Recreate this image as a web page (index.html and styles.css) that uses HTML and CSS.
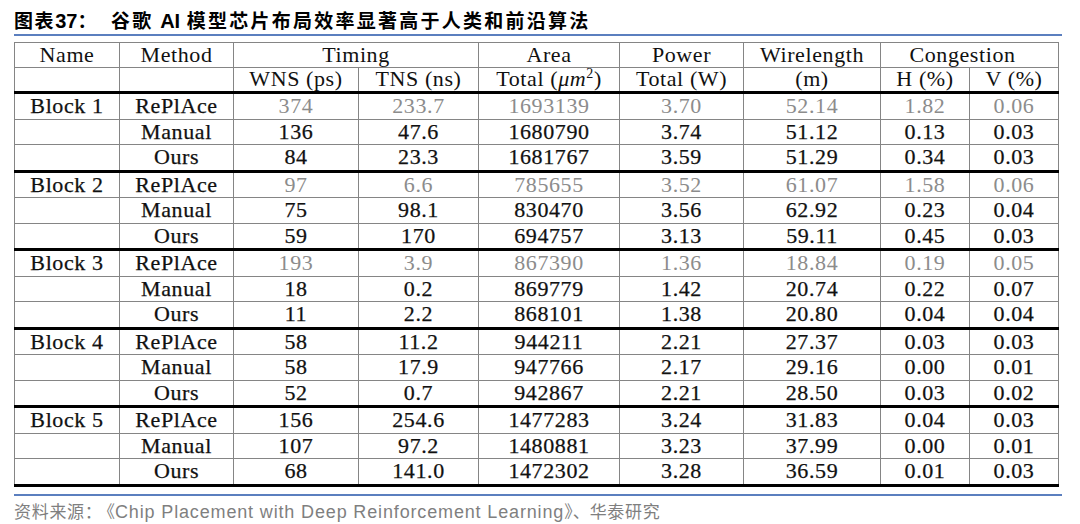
FILE: index.html
```html
<!DOCTYPE html>
<html lang="zh">
<head>
<meta charset="utf-8">
<title>图表37</title>
<link rel="stylesheet" href="styles.css">
</head>
<body>
<div class="page">
  <div class="title"><span class="label">图表<span class="num">37</span>：</span><span class="text">谷歌 <span class="ai">AI</span> 模型芯片布局效率显著高于人类和前沿算法</span></div>
  <div class="rule"></div>
  <table class="data">
    <colgroup>
      <col style="width:105px"><col style="width:114px"><col style="width:125px"><col style="width:120px"><col style="width:141px"><col style="width:124px"><col style="width:137px"><col style="width:89px"><col style="width:89px">
    </colgroup>
    <thead>
      <tr><th>Name</th><th>Method</th><th colspan="2">Timing</th><th>Area</th><th>Power</th><th>Wirelength</th><th colspan="2" class="cong">Congestion</th></tr>
      <tr class="sub"><th></th><th></th><th>WNS (ps)</th><th>TNS (ns)</th><th>Total (<i>μm</i><sup>2</sup>)</th><th>Total (W)</th><th>(m)</th><th>H (%)</th><th>V (%)</th></tr>
    </thead>
    <tbody>
      <tr class="first gray"><td class="k">Block 1</td><td class="k">RePlAce</td><td>374</td><td>233.7</td><td>1693139</td><td>3.70</td><td>52.14</td><td>1.82</td><td>0.06</td></tr>
      <tr><td></td><td>Manual</td><td>136</td><td>47.6</td><td>1680790</td><td>3.74</td><td>51.12</td><td>0.13</td><td>0.03</td></tr>
      <tr><td></td><td>Ours</td><td>84</td><td>23.3</td><td>1681767</td><td>3.59</td><td>51.29</td><td>0.34</td><td>0.03</td></tr>
      <tr class="first gray"><td class="k">Block 2</td><td class="k">RePlAce</td><td>97</td><td>6.6</td><td>785655</td><td>3.52</td><td>61.07</td><td>1.58</td><td>0.06</td></tr>
      <tr><td></td><td>Manual</td><td>75</td><td>98.1</td><td>830470</td><td>3.56</td><td>62.92</td><td>0.23</td><td>0.04</td></tr>
      <tr><td></td><td>Ours</td><td>59</td><td>170</td><td>694757</td><td>3.13</td><td>59.11</td><td>0.45</td><td>0.03</td></tr>
      <tr class="first gray"><td class="k">Block 3</td><td class="k">RePlAce</td><td>193</td><td>3.9</td><td>867390</td><td>1.36</td><td>18.84</td><td>0.19</td><td>0.05</td></tr>
      <tr><td></td><td>Manual</td><td>18</td><td>0.2</td><td>869779</td><td>1.42</td><td>20.74</td><td>0.22</td><td>0.07</td></tr>
      <tr><td></td><td>Ours</td><td>11</td><td>2.2</td><td>868101</td><td>1.38</td><td>20.80</td><td>0.04</td><td>0.04</td></tr>
      <tr class="first"><td>Block 4</td><td>RePlAce</td><td>58</td><td>11.2</td><td>944211</td><td>2.21</td><td>27.37</td><td>0.03</td><td>0.03</td></tr>
      <tr><td></td><td>Manual</td><td>58</td><td>17.9</td><td>947766</td><td>2.17</td><td>29.16</td><td>0.00</td><td>0.01</td></tr>
      <tr><td></td><td>Ours</td><td>52</td><td>0.7</td><td>942867</td><td>2.21</td><td>28.50</td><td>0.03</td><td>0.02</td></tr>
      <tr class="first"><td>Block 5</td><td>RePlAce</td><td>156</td><td>254.6</td><td>1477283</td><td>3.24</td><td>31.83</td><td>0.04</td><td>0.03</td></tr>
      <tr><td></td><td>Manual</td><td>107</td><td>97.2</td><td>1480881</td><td>3.23</td><td>37.99</td><td>0.00</td><td>0.01</td></tr>
      <tr class="last"><td></td><td>Ours</td><td>68</td><td>141.0</td><td>1472302</td><td>3.28</td><td>36.59</td><td>0.01</td><td>0.03</td></tr>
    </tbody>
  </table>
  <div class="rule bottom"></div>
  <div class="source"><span class="cjk">资料来源：</span>《<span class="lat">Chip Placement with Deep Reinforcement Learning</span>》、<span class="cjk">华泰研究</span></div>
</div>
</body>
</html>
```

FILE: styles.css
```css
html, body {
  margin: 0;
  padding: 0;
  background: #ffffff;
}
.page {
  width: 1048px;
  padding: 9px 0 0 14px;
}
.title {
  font-family: "Noto Sans CJK SC", "Noto Sans", sans-serif;
  font-weight: 700;
  font-size: 19px;
  line-height: 22px;
  height: 22px;
  color: #000;
  letter-spacing: 1.6px;
  white-space: nowrap;
}
.title .label {
  margin-right: 13px;
}
.title .text {
  letter-spacing: 2.25px;
}
.title .num, .title .ai {
  font-family: "Liberation Sans", Arial, sans-serif;
  font-weight: 700;
  letter-spacing: 0;
  font-size: 20px;
}
.rule {
  height: 2px;
  background: #5b7fbf;
  margin-top: 3px;
  width: 1048px;
}
.data {
  margin-top: 6px;
  width: 1044px;
  table-layout: fixed;
  border-collapse: collapse;
  font-family: "Liberation Serif", "Times New Roman", serif;
  font-size: 22px;
  letter-spacing: 0.6px;
  color: #111;
}
.data th, .data td {
  border: 1px solid #858585;
  padding: 0;
  height: 24.5px;
  line-height: 24px;
  text-align: center;
  font-weight: 400;
  white-space: nowrap;
}
.data thead th {
  height: 23.5px;
  line-height: 22px;
}
.data th.cong {
  padding-right: 14px;
}
.data thead tr.sub th {
  border-bottom: 3px solid #000;
}
.data tbody tr.first td {
  border-top: 3px solid #000;
}
.data tbody tr.last td {
  border-bottom: 3px solid #000;
}
.data tbody td {
  -webkit-text-stroke: 0.25px #111;
}
.data tr.gray td {
  color: #8c8c8c;
  -webkit-text-stroke: 0;
}
.data tr.gray td.k {
  color: #111;
  -webkit-text-stroke: 0.25px #111;
}
.data sup {
  font-size: 14px;
  line-height: 0;
  vertical-align: 8px;
}
.rule.bottom {
  margin-top: 7px;
}
.source {
  margin-top: 4px;
  font-family: "Noto Sans CJK SC", sans-serif;
  font-size: 17px;
  line-height: 22px;
  color: #7f7f7f;
  white-space: nowrap;
}
.source .cjk {
  letter-spacing: 0.7px;
}
.source .cjk:first-child {
  margin-right: 4px;
}
.source .lat {
  font-family: "Liberation Sans", Arial, sans-serif;
  letter-spacing: 0.85px;
  font-size: 18px;
}
```
